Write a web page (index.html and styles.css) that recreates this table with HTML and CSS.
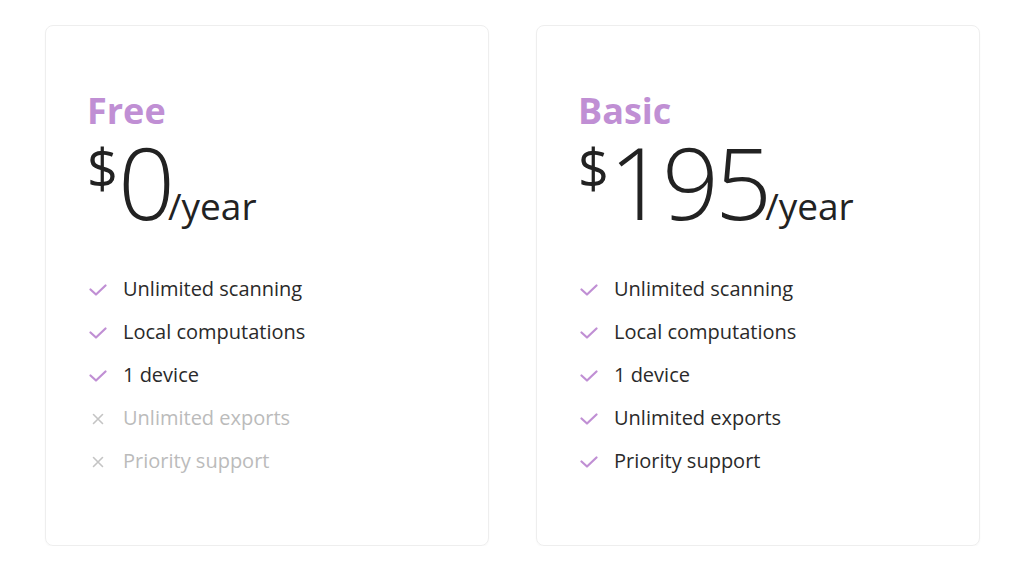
FILE: index.html
```html
<!DOCTYPE html>
<html>
<head>
<meta charset="utf-8">
<link rel="stylesheet" href="styles.css">
</head>
<body>
<div class="plans">
  <div class="card">
    <div class="name">Free</div>
    <div class="price"><span class="cur">$</span><span class="amount">0</span><span class="per">/year</span></div>
    <ul class="features">
      <li class="on"><svg class="ic" viewBox="0 0 18 12"><path d="M1.5 5.5 L7 10.5 L16.5 1.5"/></svg>Unlimited scanning</li>
      <li class="on"><svg class="ic" viewBox="0 0 18 12"><path d="M1.5 5.5 L7 10.5 L16.5 1.5"/></svg>Local computations</li>
      <li class="on"><svg class="ic" viewBox="0 0 18 12"><path d="M1.5 5.5 L7 10.5 L16.5 1.5"/></svg>1 device</li>
      <li class="off"><svg class="ic" viewBox="0 0 18 12"><path d="M4.5 1.5 L13.5 10.5 M13.5 1.5 L4.5 10.5"/></svg>Unlimited exports</li>
      <li class="off"><svg class="ic" viewBox="0 0 18 12"><path d="M4.5 1.5 L13.5 10.5 M13.5 1.5 L4.5 10.5"/></svg>Priority support</li>
    </ul>
  </div>
  <div class="card">
    <div class="name">Basic</div>
    <div class="price"><span class="cur">$</span><span class="amount">195</span><span class="per">/year</span></div>
    <ul class="features">
      <li class="on"><svg class="ic" viewBox="0 0 18 12"><path d="M1.5 5.5 L7 10.5 L16.5 1.5"/></svg>Unlimited scanning</li>
      <li class="on"><svg class="ic" viewBox="0 0 18 12"><path d="M1.5 5.5 L7 10.5 L16.5 1.5"/></svg>Local computations</li>
      <li class="on"><svg class="ic" viewBox="0 0 18 12"><path d="M1.5 5.5 L7 10.5 L16.5 1.5"/></svg>1 device</li>
      <li class="on"><svg class="ic" viewBox="0 0 18 12"><path d="M1.5 5.5 L7 10.5 L16.5 1.5"/></svg>Unlimited exports</li>
      <li class="on"><svg class="ic" viewBox="0 0 18 12"><path d="M1.5 5.5 L7 10.5 L16.5 1.5"/></svg>Priority support</li>
    </ul>
  </div>
</div>
</body>
</html>
```
FILE: styles.css
```css
html, body {
  margin: 0;
  padding: 0;
  background: #fff;
}
body {
  font-family: "Open Sans", "Liberation Sans", sans-serif;
  color: #222;
}
.plans {
  display: flex;
  gap: 47px;
  padding: 25px 0 0 45px;
}
.card {
  box-sizing: border-box;
  width: 444px;
  height: 521px;
  border: 1px solid #eeeeee;
  border-radius: 8px;
  box-shadow: 0 1px 2px rgba(0,0,0,0.03);
  padding: 65px 0 0 41px;
}
.name {
  font-size: 36px;
  font-weight: 700;
  color: #c08fd4;
  line-height: 40px;
}
.price {
  display: flex;
  align-items: baseline;
  margin-top: 0;
  white-space: nowrap;
}
.cur {
  align-self: flex-start;
  margin-top: 9px;
  font-size: 54px;
  line-height: 54px;
  font-weight: 400;
}
.amount {
  font-size: 100px;
  line-height: 100px;
  font-weight: 300;
  letter-spacing: -4px;
}
.per {
  font-size: 37px;
  line-height: 40px;
  font-weight: 400;
  margin-left: -3px;
}
.features {
  list-style: none;
  margin: 36px 0 0;
  padding: 0;
}
.features li {
  display: flex;
  align-items: center;
  height: 43px;
  font-size: 20px;
  color: #2a2a2a;
}
.features li.off {
  color: #bbbbbb;
}
.ic {
  width: 18px;
  height: 12px;
  margin: 2px 16px 0 2px;
  fill: none;
  stroke-width: 2.2;
  stroke-linecap: round;
  stroke-linejoin: round;
}
.on .ic { stroke: #c08fd4; }
.off .ic { stroke: #c4c4c4; stroke-width: 1.6; }
```
